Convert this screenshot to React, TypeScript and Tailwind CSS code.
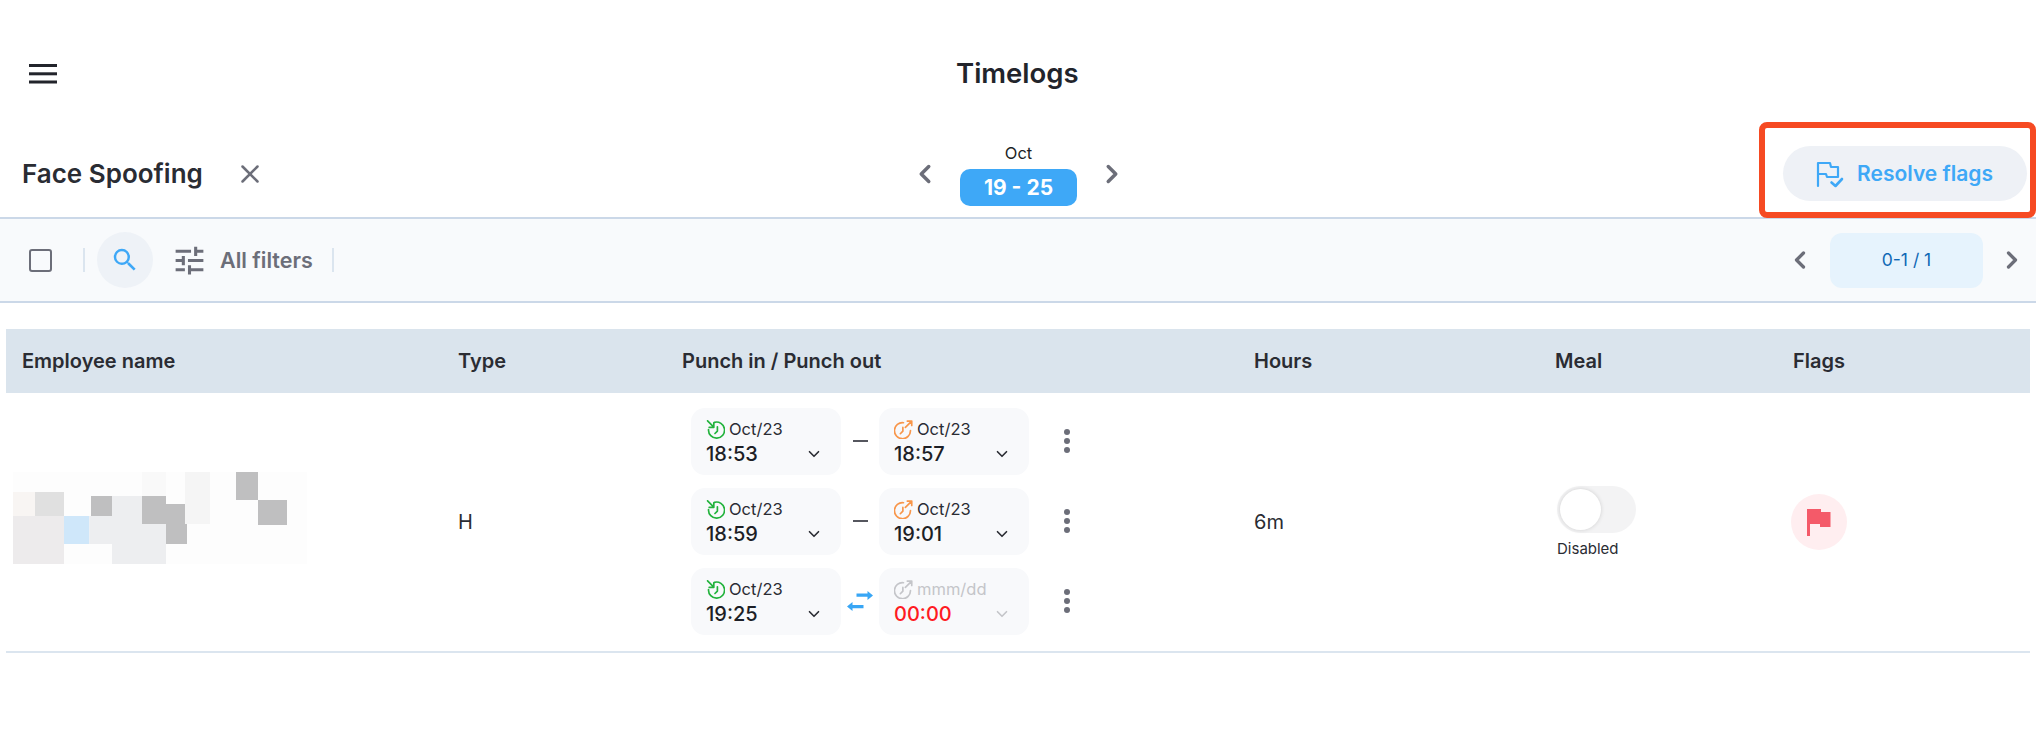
import { ChevronDown, ChevronLeft, ChevronRight, X } from "lucide-react";

const font = { fontFamily: "Inter, 'Liberation Sans', sans-serif" };

function InIcon() {
  return (
    <svg width="19" height="19" viewBox="0 0 18 18" fill="none" stroke="#22b33c" strokeWidth="1.6" strokeLinecap="round" strokeLinejoin="round">
      <path d="M8 2.2A7.6 7.6 0 1 1 2.4 9" />
      <path d="M1.5 0.8 L7.4 6.7 M7.4 2.6 V6.9 H3" />
      <path d="M10.8 6.5 V10.5 L8.5 12.8" />
    </svg>
  );
}

function OutIcon({ color }: { color: string }) {
  return (
    <svg width="19" height="19" viewBox="0 0 18 18" fill="none" stroke={color} strokeWidth="1.6" strokeLinecap="round" strokeLinejoin="round">
      <path d="M9 2.6A7.6 7.6 0 1 0 15.6 10" />
      <path d="M10.8 7 L16.8 1 M12.6 1 H16.8 V5.2" />
      <path d="M8.4 7 V10.6 L6 13" />
    </svg>
  );
}

function PunchCell({ type, date, time }: { type: "in" | "out" | "empty"; date: string; time: string }) {
  const empty = type === "empty";
  return (
    <div className="w-[150px] h-[67px] rounded-[14px] bg-[#f8f9fb] pl-[15px] pr-[18px] pt-[11px]">
      <div className="flex items-center gap-[4px] h-[22px]">
        {type === "in" ? <InIcon /> : <OutIcon color={empty ? "#c4c5c9" : "#f8964a"} />}
        <span className={`text-[16.5px] ${empty ? "text-[#c4c5c9]" : "text-[#2a2c33]"}`}>{date}</span>
      </div>
      <div className="flex items-center justify-between h-[26px]">
        <span className={`text-[20px] font-medium ${empty ? "text-[#ff1a22]" : "text-[#1d1f26]"}`}>{time}</span>
        <ChevronDown size={18} strokeWidth={2.2} className={empty ? "text-[#c4c5c9]" : "text-[#2a2c33]"} />
      </div>
    </div>
  );
}

function Dots() {
  return (
    <div className="flex flex-col gap-[3px] ml-[35px]">
      <span className="w-[6px] h-[6px] rounded-full bg-[#6c6e79]" />
      <span className="w-[6px] h-[6px] rounded-full bg-[#6c6e79]" />
      <span className="w-[6px] h-[6px] rounded-full bg-[#6c6e79]" />
    </div>
  );
}

function PunchRow({ inTime, outTime, open }: { inTime: string; outTime?: string; open?: boolean }) {
  return (
    <div className="flex items-center">
      <PunchCell type="in" date="Oct/23" time={inTime} />
      <div className="w-[38px] flex justify-center">
        {open ? (
          <svg width="28" height="20" viewBox="0 0 27 20" fill="#38a6f5">
            <path d="M10 2.6 H21 V0 L26.5 4.5 L21 9 V5.8 H10 Z" />
            <path d="M17 14 H6 V11 L0.5 15.5 L6 20 V17.2 H17 Z" />
          </svg>
        ) : (
          <span className="w-[15px] h-[2px] bg-[#55565e]" />
        )}
      </div>
      {open ? (
        <PunchCell type="empty" date="mmm/dd" time="00:00" />
      ) : (
        <PunchCell type="out" date="Oct/23" time={outTime ?? ""} />
      )}
      <Dots />
    </div>
  );
}

export default function App() {
  return (
    <div className="relative w-[2036px] h-[732px] bg-white overflow-hidden" style={font}>
      {/* top bar */}
      <div className="h-[125px] flex items-center pl-[29px] pt-[23px]">
        <svg width="28" height="20" viewBox="0 0 28 20" fill="#22242b">
          <rect x="0" y="0" width="28" height="3" />
          <rect x="0" y="8.3" width="28" height="3" />
          <rect x="0" y="16.5" width="28" height="3" />
        </svg>
        <h1 className="text-[27.5px] font-semibold text-[#22242b] ml-[899px]">Timelogs</h1>
      </div>

      {/* title row */}
      <div className="h-[94px] flex items-start pl-[22px] pr-[9px] border-b-2 border-[#cbd8e8]">
        <div className="flex items-center w-[888px] h-[55px] mt-[21px]">
          <span className="text-[26px] font-semibold text-[#2a2c33]">Face Spoofing</span>
          <X size={30} strokeWidth={2} className="ml-[32px] text-[#6c6e79]" />
        </div>
        <div className="flex items-center gap-[20px] mt-[16px]">
          <ChevronLeft size={30} strokeWidth={2.8} className="text-[#6c6e79] mt-[1px]" />
          <div className="flex flex-col items-center">
            <span className="text-[16.5px] leading-[24px] h-[28px] text-[#1d1f26]">Oct</span>
            <div className="w-[117px] h-[37px] rounded-[10px] bg-[#3ea8f7] text-white text-[21px] font-bold flex items-center justify-center">19 - 25</div>
          </div>
          <ChevronRight size={30} strokeWidth={2.8} className="text-[#6c6e79] mt-[1px]" />
        </div>
        <button className="ml-auto w-[244px] h-[55px] mt-[21px] rounded-full bg-[#eef1f6] flex items-center justify-center gap-[13px] text-[21px] font-semibold text-[#3ea8f7]">
          <svg width="30" height="30" viewBox="0 0 30 30" fill="none" stroke="#3ea8f7" strokeWidth="2.2" strokeLinecap="round" strokeLinejoin="round" className="-ml-[3px]">
            <path d="M4 27 V4 H16 L17 8 H24 V18 H13 L12 15 H4" />
            <path d="M17.5 23.5 L21.5 27 L28 20" strokeWidth="2.6" />
          </svg>
          Resolve flags
        </button>
      </div>

      {/* toolbar */}
      <div className="h-[84px] flex items-center bg-[#f8fafc] border-b-2 border-[#cbd8e8] pl-[29px] pr-[10px]">
        <span className="w-[23px] h-[23px] rounded-[3px] border-[2.5px] border-[#6c6e79]" />
        <span className="w-[2px] h-[24px] bg-[#dbe5ef] ml-[31px]" />
        <span className="w-[56px] h-[56px] rounded-full bg-[#eef2f7] flex items-center justify-center ml-[12px]">
          <svg width="30" height="30" viewBox="0 0 24 24" fill="#3ea8f7">
            <path d="M15.5 14h-.79l-.28-.27A6.471 6.471 0 0 0 16 9.5 6.5 6.5 0 1 0 9.5 16c1.61 0 3.09-.59 4.23-1.57l.27.28v.79l5 4.99L20.49 19l-4.99-5zm-6 0C7.01 14 5 11.99 5 9.5S7.01 5 9.5 5 14 7.01 14 9.5 11.99 14 9.5 14z" />
          </svg>
        </span>
        <svg width="37" height="37" viewBox="0 0 24 24" fill="#6c6e79" className="ml-[18px]">
          <path d="M3 17v2h6v-2H3zM3 5v2h10V5H3zm10 16v-2h8v-2h-8v-2h-2v6h2zM7 9v2H3v2h4v2h2V9H7zm14 4v-2H11v2h10zm-6-4h2V7h4V5h-4V3h-2v6z" />
        </svg>
        <span className="text-[21.5px] font-semibold text-[#6c6e79] ml-[12px]">All filters</span>
        <span className="w-[2px] h-[24px] bg-[#dbe5ef] ml-[19px]" />
        <div className="ml-auto flex items-center">
          <ChevronLeft size={28} strokeWidth={2.8} className="text-[#6c6e79]" />
          <span className="w-[153px] h-[55px] rounded-[12px] bg-[#e6f3fd] ml-[16px] mr-[15px] flex items-center justify-center text-[17.5px] text-[#0f68b5]">0-1 / 1</span>
          <ChevronRight size={28} strokeWidth={2.8} className="text-[#6c6e79]" />
        </div>
      </div>

      {/* table */}
      <div className="mx-[6px] mt-[26px]">
        <div className="grid grid-cols-[436px_240px_572px_301px_238px_1fr] h-[64px] items-center bg-[#dae4ed] text-[20px] font-semibold text-[#2a2c33]">
          <span className="pl-[16px]">Employee name</span>
          <span className="pl-[16px]">Type</span>
          <span>Punch in / Punch out</span>
          <span>Hours</span>
          <span>Meal</span>
          <span>Flags</span>
        </div>
        <div className="grid grid-cols-[436px_240px_572px_301px_238px_1fr] h-[260px] items-center border-b-2 border-[#dbe5ef] text-[20px] text-[#2a2c33]">
          <svg width="330" height="130" viewBox="0 0 990 390" className="-ml-[6px] mt-[-15px]">
            <rect x="39" y="66" width="881" height="276" fill="#fdfdfd" />
            <rect x="426" y="66" width="72" height="72" fill="#f9f9f9" />
            <rect x="555" y="66" width="75" height="156" fill="#f5f5f5" />
            <rect x="708" y="66" width="66" height="84" fill="#bfbfc0" />
            <rect x="774" y="150" width="87" height="75" fill="#bfbfc0" />
            <rect x="39" y="126" width="66" height="72" fill="#f8f5f3" />
            <rect x="105" y="126" width="87" height="72" fill="#e0e0e0" />
            <rect x="273" y="138" width="63" height="60" fill="#bfbfc0" />
            <rect x="336" y="138" width="90" height="60" fill="#edeef0" />
            <rect x="426" y="138" width="72" height="84" fill="#bfbfc0" />
            <rect x="498" y="162" width="57" height="60" fill="#bfbfc0" />
            <rect x="498" y="222" width="63" height="60" fill="#bfbfc0" />
            <rect x="39" y="198" width="153" height="144" fill="#edebec" />
            <rect x="192" y="198" width="76" height="84" fill="#cfe7fa" />
            <rect x="268" y="198" width="158" height="84" fill="#edeef0" />
            <rect x="426" y="222" width="72" height="60" fill="#edeef0" />
            <rect x="336" y="282" width="162" height="60" fill="#edeef0" />
          </svg>
          <span className="pl-[16px]">H</span>
          <div className="flex flex-col gap-[13px] pl-[9px] -mt-[2px]">
            <PunchRow inTime="18:53" outTime="18:57" />
            <PunchRow inTime="18:59" outTime="19:01" />
            <PunchRow inTime="19:25" open />
          </div>
          <span>6m</span>
          <div className="flex flex-col items-start gap-[5px] mt-[3px]">
            <span className="relative w-[79px] h-[47px] rounded-full bg-[#f3f3f4] ml-[2px]">
              <span className="absolute left-[3px] top-[3px] w-[41px] h-[41px] rounded-full bg-white shadow-[0_0_4px_rgba(0,0,0,0.15)]" />
            </span>
            <span className="text-[15px] text-[#2a2c33] ml-[2px]">Disabled</span>
          </div>
          <span className="w-[56px] h-[56px] rounded-full bg-[#ffeef0] flex items-center justify-center -ml-[2px]">
            <svg width="24" height="27" viewBox="0 0 24 27" fill="#f45a69">
              <path d="M0 0 H14 V3 H23.5 V18 H13 V15 H3 V27 H0 Z" />
            </svg>
          </span>
        </div>
      </div>

      {/* highlight box */}
      <div className="absolute left-[1759px] top-[122px] w-[277px] h-[96px] border-[6px] border-[#f64a22] rounded-[8px] pointer-events-none" />
    </div>
  );
}
